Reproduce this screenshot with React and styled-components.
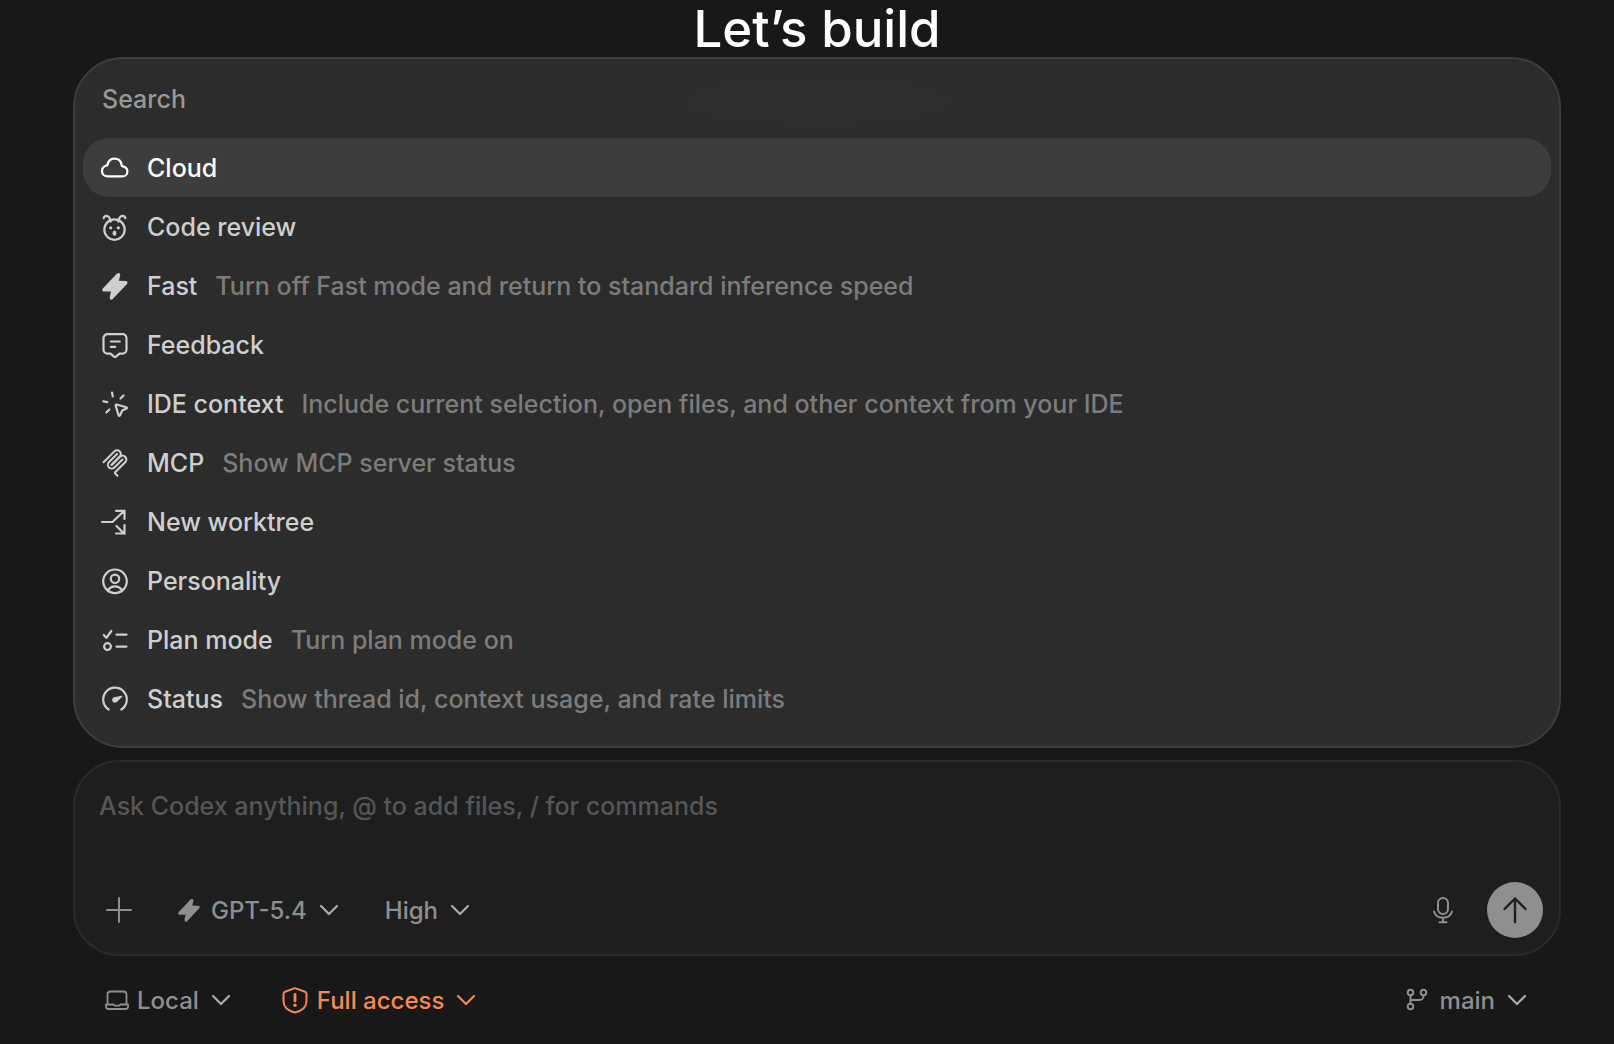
import React, { useState } from "react";
import styled, { createGlobalStyle } from "styled-components";

const GlobalStyle = createGlobalStyle`
  *, *::before, *::after { box-sizing: border-box; }
  body {
    margin: 0;
    background: #181818;
    color: #cfcfcf;
    font-family: Inter, "Liberation Sans", sans-serif;
    font-weight: 450;
    -webkit-font-smoothing: antialiased;
  }
  button, input, textarea, select {
    margin: 0;
    padding: 0;
    border: 0;
    outline: 0;
    background: none;
    color: inherit;
    font: inherit;
  }
  button { cursor: pointer; }
`;

const Page = styled.main`
  display: flex;
  flex-direction: column;
  min-height: 100vh;
  padding: 0 53px 0 73px;
`;

const Title = styled.h1`
  margin: 0;
  color: #fff;
  font-size: 51px;
  font-weight: 500;
  line-height: 57px;
  text-align: center;
`;

const Menu = styled.section`
  display: flex;
  flex-direction: column;
  padding: 0 8px 18px;
  border: 2px solid #3d3d3d;
  border-radius: 50px;
  background:
    radial-gradient(200px 36px at 50% 42px, #2f2f2f, #2c2c2c) no-repeat,
    #2c2c2c;
`;

const SearchField = styled.input`
  height: 79px;
  padding: 0 20px 0 19px;
  font-size: 25px;
  &::placeholder { color: #989898; opacity: 1; }
`;

const CommandList = styled.ul`
  margin: 0;
  padding: 0;
  list-style: none;
`;

const Command = styled.button`
  display: flex;
  align-items: center;
  width: 100%;
  height: 59px;
  padding: 0 18px;
  border-radius: 26px;
  background: ${(p) => (p.$active ? "#3d3d3d" : "transparent")};
  color: ${(p) => (p.$active ? "#fff" : "#cfcfcf")};
  font-size: 25px;
  text-align: left;
  white-space: nowrap;
`;

const CommandName = styled.span`
  margin-left: 18px;
`;

const CommandHint = styled.span`
  margin-left: 18px;
  color: #7c7c7c;
`;

const Composer = styled.form`
  display: flex;
  flex-direction: column;
  margin-top: 12px;
  padding: 26px 16px 16px 24px;
  border: 2px solid #2a2a2a;
  border-radius: 46px;
  background: #1e1e1e;
`;

const Prompt = styled.textarea`
  display: block;
  height: 94px;
  resize: none;
  font-size: 25px;
  line-height: 36px;
  &::placeholder { color: #565656; opacity: 1; }
`;

const Toolbar = styled.div`
  display: flex;
  align-items: center;
  height: 56px;
  padding-left: 2px;
  color: #8f8f8f;
`;

const Footer = styled.footer`
  display: flex;
  align-items: center;
  height: 88px;
  padding: 0 34px 0 32px;
  color: #8f8f8f;
`;

const Spacer = styled.div`
  flex: 1;
`;

const IconButton = styled.button`
  display: grid;
  place-items: center;
  width: 36px;
  height: 36px;
`;

const SendButton = styled.button`
  display: grid;
  place-items: center;
  width: 56px;
  height: 56px;
  margin-left: 26px;
  border-radius: 50%;
  background: #8f8f8f;
  color: #1e1e1e;
`;

const Picker = styled.label`
  display: flex;
  align-items: center;
  gap: ${(p) => p.$gap || 10}px;
  margin-left: ${(p) => p.$space || 0}px;
  color: ${(p) => p.$tone || "inherit"};
  font-size: 24px;
`;

const SelectBox = styled.span`
  display: grid;
  align-items: center;
`;

const Select = styled.select`
  grid-area: 1 / 1;
  height: 36px;
  padding-right: 32px;
  appearance: none;
  field-sizing: content;
  cursor: pointer;
  option { color: #cfcfcf; background: #2c2c2c; }
`;

const Chevron = styled.svg`
  grid-area: 1 / 1;
  justify-self: end;
  color: ${(p) => p.$tone || "#acacac"};
  pointer-events: none;
`;

const Glyph = styled.svg`
  flex: none;
  display: block;
`;

function Icon({ w = 28, h = 28, box, stroke = 2, children }) {
  return (
    <Glyph
      width={w}
      height={h}
      viewBox={box || `0 0 ${w} ${h}`}
      fill="none"
      stroke="currentColor"
      strokeWidth={stroke}
      strokeLinecap="round"
      strokeLinejoin="round"
      aria-hidden="true"
    >
      {children}
    </Glyph>
  );
}

const boltPath =
  "M16 1.6 L1.8 16.6 Q0.4 19.3 3 19.5 L10 19.6 L8.7 25.5 Q8.8 28.6 11.5 27.3 L26 12 Q27.4 9.3 24.8 9.1 L17.8 8.8 L19.3 3 Q19.1 0 16 1.6Z";

const CloudIcon = () => (
  <Icon stroke={2.2}>
    <path d="M6.800 22.400C3.600 22.400 1 20.200 1 17c0-3 2.200-5.100 5.300-5.800C7.200 7.200 9.800 4.600 13.300 4.600c4 0 6.700 2.600 7.300 6.400.1.800.5 1.200 1.200 1.400 2.600.6 4.600 2.300 4.600 5 0 2.900-2.400 5-5 5Z" />
  </Icon>
);

const ReviewIcon = () => (
  <Icon stroke={2.2}>
    <circle cx="13.500" cy="16.600" r="10.200" />
    <path d="M2.600 5.200C3.200 2.400 6.400 2 8 4.200c1 1.400 1.400 2.800 1.700 4.400M24.400 5.200C23.800 2.400 20.600 2 19 4.200c-1 1.400-1.400 2.800-1.700 4.400" />
    <g fill="currentColor" stroke="none">
      <circle cx="9.700" cy="14.800" r="1.600" />
      <circle cx="17.300" cy="14.800" r="1.600" />
      <ellipse cx="13.500" cy="20.200" rx="1.900" ry="2.700" />
    </g>
  </Icon>
);

const BoltIcon = ({ size = 28 }) => (
  <Icon w={size} h={size} box="0 0 28 28">
    <path d={boltPath} fill="currentColor" stroke="none" />
  </Icon>
);

const FeedbackIcon = () => (
  <Icon stroke={2.2}>
    <path d="M6.500 3.200h15a4 4 0 0 1 4 4V18.600a4 4 0 0 1-4 4H18.400L15.300 25.400a2 2 0 0 1-2.600 0L9.600 22.600H6.500a4 4 0 0 1-4-4V7.200a4 4 0 0 1 4-4Z" />
    <path d="M9.800 10.500h9M9.800 15.800h4.500" />
  </Icon>
);

const ContextIcon = () => (
  <Icon stroke={2.2}>
    <path d="M11 2.500l.8 4M19.500 8.500l3-3M2.300 11.300l4 .8M5.300 22.500l3-3" />
    <path d="M15.600 14.500l9.800 2.700c.8.300.8 1 .1 1.400l-4.200 1.900-2.400 4.900c-.4.700-1.200.6-1.400-.1l-2.800-9.700c-.2-.7.200-1.200.9-1.100Z" />
  </Icon>
);

const McpIcon = () => (
  <Icon box="2 2 176 176" stroke={13}>
    <path d="M18 84.853L85.882 16.971c9.373-9.373 24.569-9.373 33.941 0 9.373 9.372 9.373 24.568 0 33.941L68.558 102.177" />
    <path d="M69.265 101.470L119.823 50.912c9.373-9.373 24.569-9.373 33.942 0l.353.353c9.373 9.373 9.373 24.569 0 33.941L92.725 146.600c-3.124 3.124-3.124 8.189 0 11.313l12.606 12.607" />
    <path d="M102.853 33.941L52.648 84.146c-9.372 9.372-9.372 24.568 0 33.941 9.373 9.372 24.569 9.372 33.941 0L136.794 67.882" />
  </Icon>
);

const WorktreeIcon = () => (
  <Icon stroke={2.2}>
    <path d="M1 14h10.500L23 3M15 2.800h8.500V11M15.500 18l7.500 7.500M15 25.500h8.500V17" strokeLinejoin="miter" />
  </Icon>
);

const PersonIcon = () => (
  <Icon stroke={2.2}>
    <circle cx="14" cy="14.300" r="11.800" />
    <circle cx="14" cy="11.800" r="4.200" />
    <path d="M7 22.800c2-2.400 4-3.400 7-3.400s5 1 7 3.400" />
  </Icon>
);

const PlanIcon = () => (
  <Icon stroke={2.2}>
    <path d="M2.800 9l2.600 2.800L10.300 5M15.500 8.600h10M15.500 20.600h10" />
    <circle cx="6.500" cy="20.600" r="3.400" />
  </Icon>
);

const StatusIcon = () => (
  <Icon stroke={2.2}>
    <path d="M7.700 24.500A11.800 11.800 0 1 1 20.300 24.500" />
    <path d="M20.600 10.800c.8-.2 1 .6.4 1.100l-4.800 4.800c-1.300 1.300-3.600 1.200-4.600-.3-1-1.500-.3-3.500 1.400-4.100Z" fill="currentColor" stroke="none" />
  </Icon>
);

const commands = [
  { name: "Cloud", icon: CloudIcon },
  { name: "Code review", icon: ReviewIcon },
  { name: "Fast", hint: "Turn off Fast mode and return to standard inference speed", icon: BoltIcon },
  { name: "Feedback", icon: FeedbackIcon },
  { name: "IDE context", hint: "Include current selection, open files, and other context from your IDE", icon: ContextIcon },
  { name: "MCP", hint: "Show MCP server status", icon: McpIcon },
  { name: "New worktree", icon: WorktreeIcon },
  { name: "Personality", icon: PersonIcon },
  { name: "Plan mode", hint: "Turn plan mode on", icon: PlanIcon },
  { name: "Status", hint: "Show thread id, context usage, and rate limits", icon: StatusIcon },
];

function PickerField({ label, value, icon, space, gap, tone }) {
  return (
    <Picker $space={space} $gap={gap} $tone={tone}>
      {icon}
      <SelectBox>
        <Select aria-label={label} defaultValue={value}>
          <option>{value}</option>
        </Select>
        <Chevron $tone={tone} width="20" height="20" viewBox="0 0 20 20" fill="none" stroke="currentColor" strokeWidth="2.200" strokeLinecap="round" strokeLinejoin="round" aria-hidden="true">
          <path d="M2 6l8 8 8-8" />
        </Chevron>
      </SelectBox>
    </Picker>
  );
}

export default function App() {
  const [active, setActive] = useState("Cloud");

  return (
    <>
      <GlobalStyle />
      <Page>
        <Title>Let’s build</Title>

        <Menu aria-label="Commands">
          <SearchField type="text" placeholder="Search" aria-label="Search" />
          <CommandList>
            {commands.map(({ name, hint, icon: CommandIcon }) => (
              <li key={name}>
                <Command type="button" $active={active === name} onMouseEnter={() => setActive(name)}>
                  <CommandIcon />
                  <CommandName>{name}</CommandName>
                  {hint && <CommandHint>{hint}</CommandHint>}
                </Command>
              </li>
            ))}
          </CommandList>
        </Menu>

        <Composer onSubmit={(e) => e.preventDefault()}>
          <Prompt aria-label="Prompt" placeholder="Ask Codex anything, @ to add files, / for commands" />
          <Toolbar>
            <IconButton type="button" aria-label="Add">
              <Icon>
                <path d="M14 2v24M2 14h24" />
              </Icon>
            </IconButton>
            <PickerField label="Model" value="GPT-5.4" space={40} icon={<BoltIcon size={24} />} />
            <PickerField label="Reasoning effort" value="High" space={46} />
            <Spacer />
            <IconButton type="button" aria-label="Dictate">
              <Icon>
                <rect x="9" y="2" width="10" height="16" rx="5" />
                <path d="M5 15.500c1.200 3.900 4.700 6.300 9 6.300s7.800-2.400 9-6.300M14 22v4M10.500 26.300h7" />
              </Icon>
            </IconButton>
            <SendButton type="submit" aria-label="Send">
              <Icon stroke={2.4}>
                <path d="M14 26V2.500M3.500 13L14 2.500 24.500 13" />
              </Icon>
            </SendButton>
          </Toolbar>
        </Composer>

        <Footer>
          <PickerField
            label="Environment"
            value="Local"
            gap={8}
            icon={
              <Icon w={24} h={28} stroke={1.8}>
                <path d="M2.500 18V8.500a3 3 0 0 1 3-3h13a3 3 0 0 1 3 3V18M1 18.500h7.500l1.500 1.200h4l1.500-1.200H23v2a2.500 2.500 0 0 1-2.500 2.500h-17A2.500 2.500 0 0 1 1 20.500Z" />
              </Icon>
            }
          />
          <PickerField
            label="Permissions"
            value="Full access"
            space={50}
            gap={8}
            tone="#f58a51"
            icon={
              <Icon w={28} h={28}>
                <path d="M13.200 2.400a2.400 2.400 0 0 1 1.600 0l9.200 3.400c1 .4 1.500 1.200 1.500 2.200v7c0 6.300-5.200 10-11.500 11.400C7.700 25 2.500 21.300 2.500 15V8c0-1 .5-1.800 1.500-2.200Z" />
                <path d="M14 8.500v6.500" strokeWidth="2.800" />
                <circle cx="14" cy="19.300" r="1.700" fill="currentColor" stroke="none" />
              </Icon>
            }
          />
          <Spacer />
          <PickerField
            label="Branch"
            value="main"
            gap={12}
            icon={
              <Icon w={22} h={24}>
                <circle cx="4.500" cy="4.500" r="2.800" />
                <circle cx="17.500" cy="4.500" r="2.800" />
                <circle cx="4.500" cy="18.500" r="2.800" />
                <path d="M4.500 7.500v8M17.500 7.500v.5a4 4 0 0 1-4 4h-9" />
              </Icon>
            }
          />
        </Footer>
      </Page>
    </>
  );
}
